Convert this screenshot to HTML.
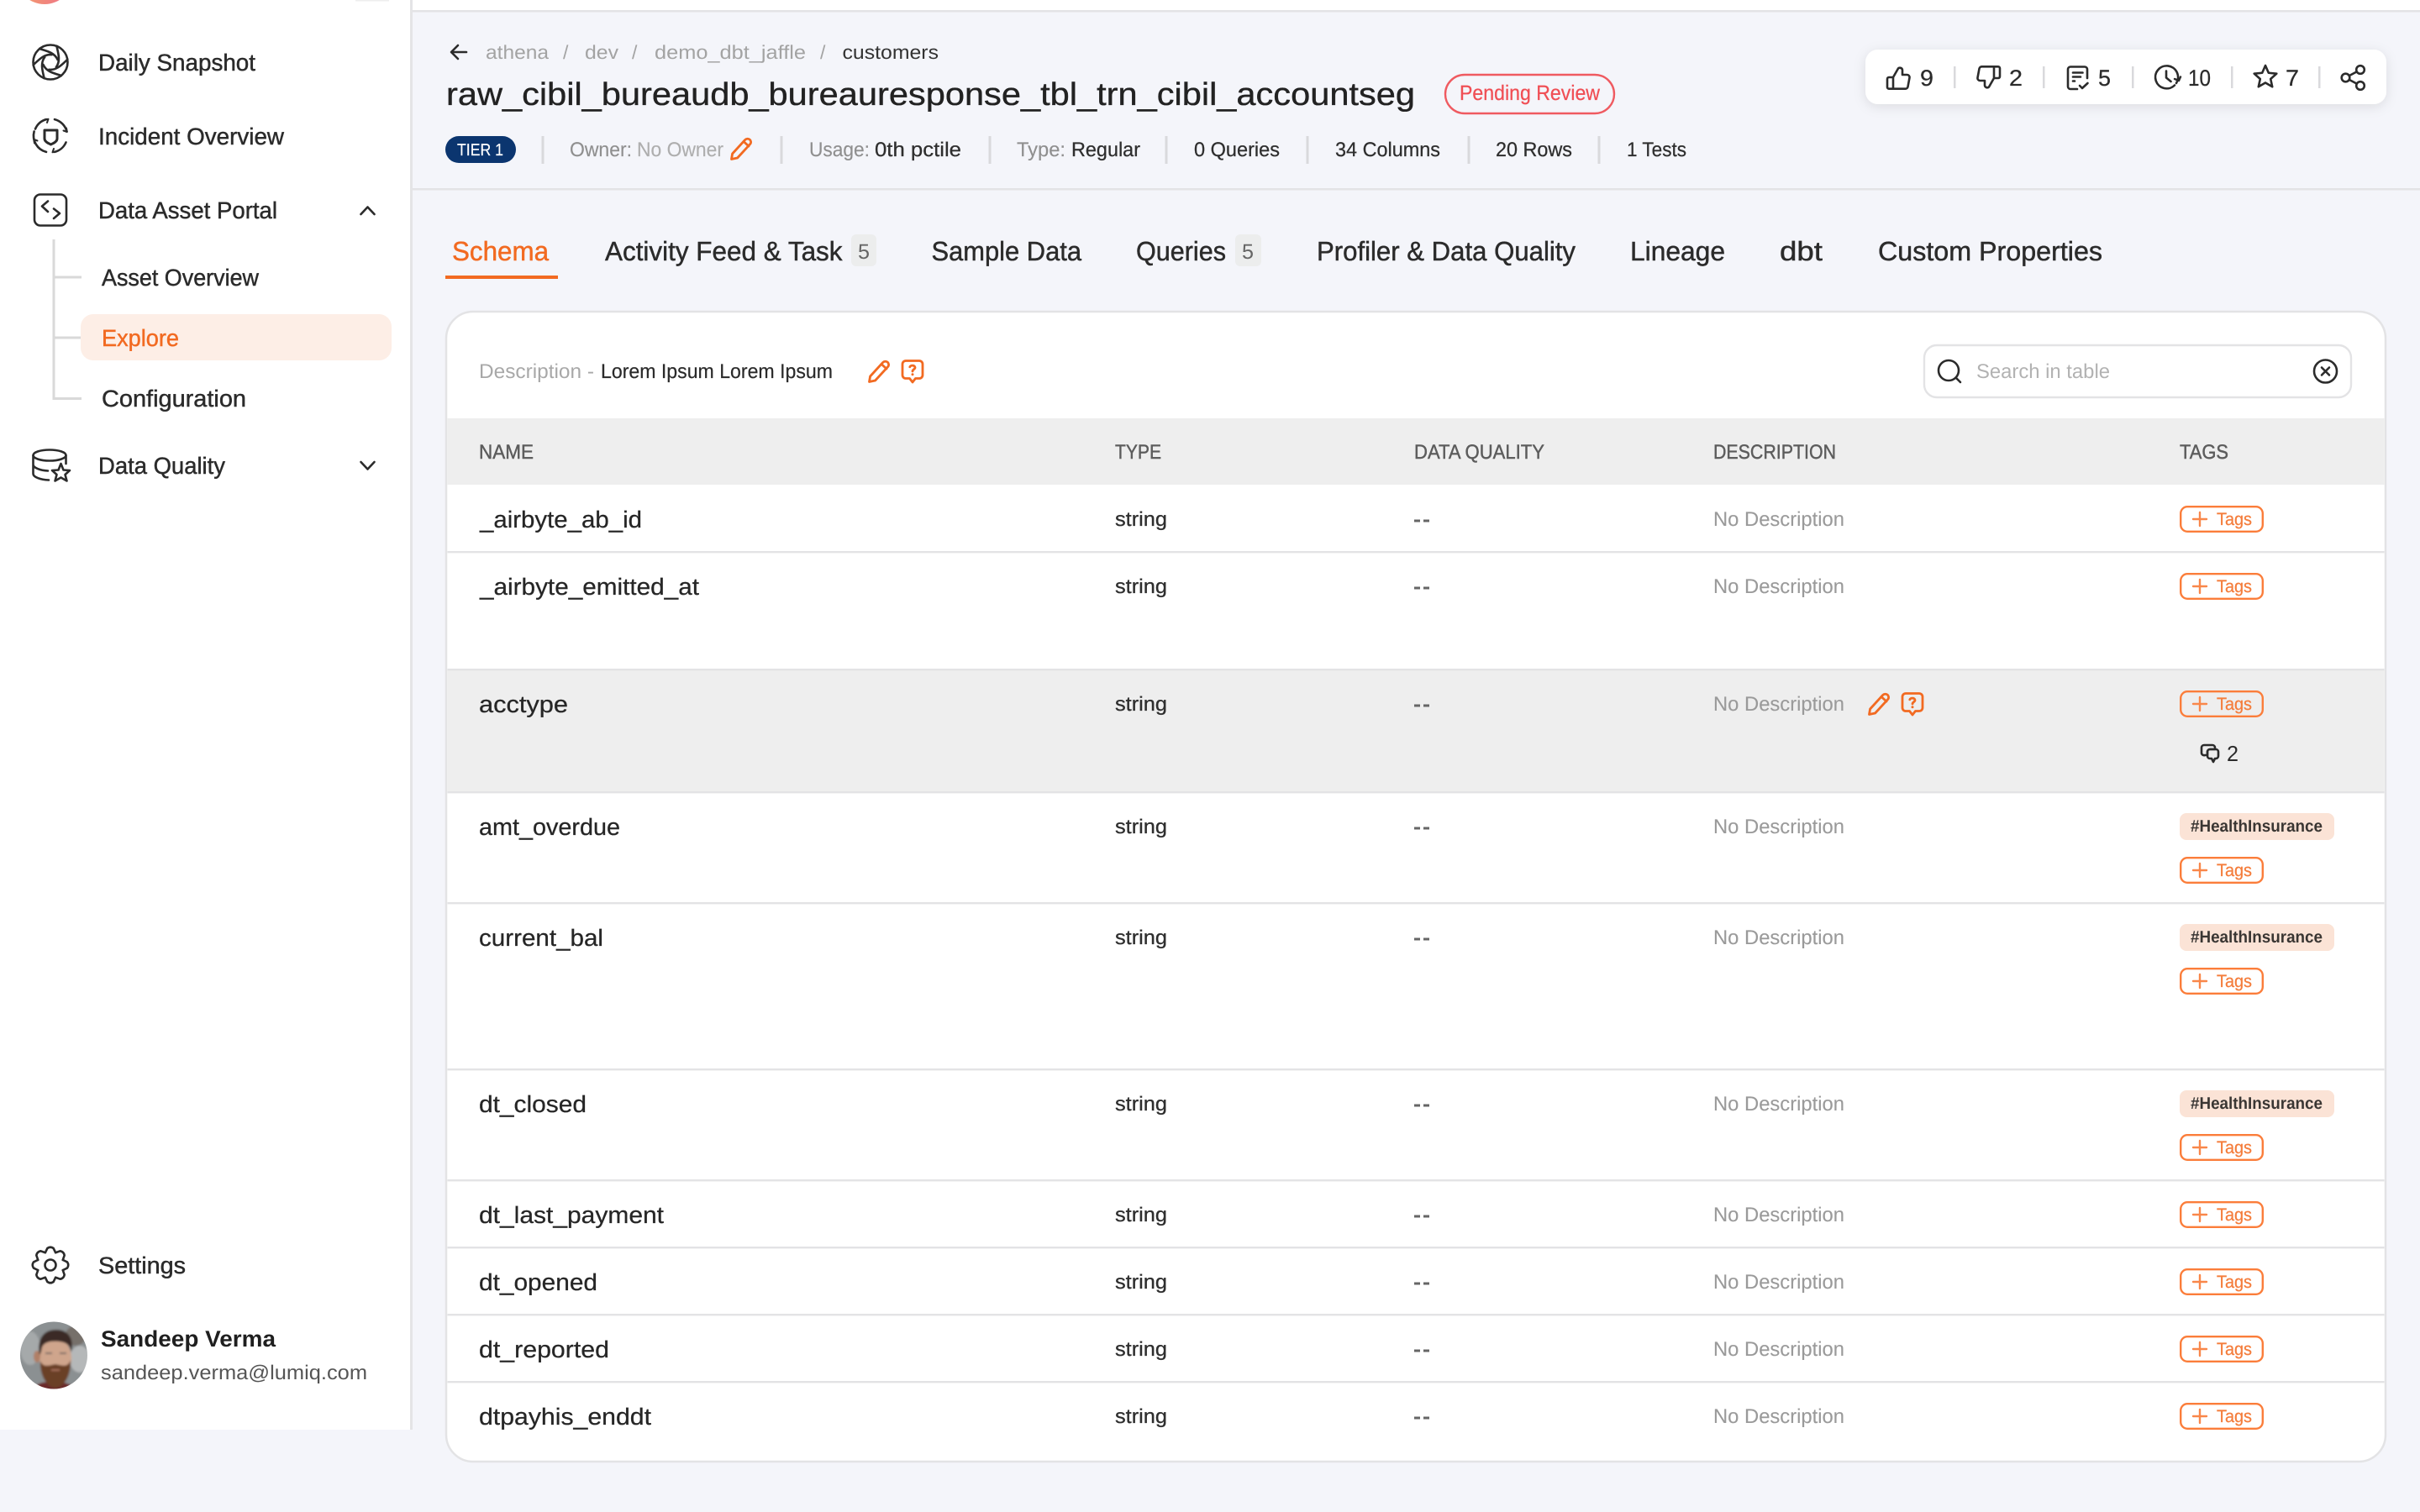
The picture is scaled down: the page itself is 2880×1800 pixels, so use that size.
<!DOCTYPE html>
<html lang="en">
<head>
<meta charset="utf-8">
<title>Explore - customers</title>
<style>
html,body{margin:0;padding:0;background:#f4f5fa;width:2880px;height:1800px;overflow:hidden}
svg{display:block;font-family:"Liberation Sans",Arial,sans-serif;text-rendering:geometricPrecision}
.nav{font-size:28px;fill:#2b2b2b;stroke:#2b2b2b;stroke-width:.45}
.bc{font-size:23px;fill:#a3a3a3}
.meta{font-size:24px;fill:#2e2e2e;stroke:#2e2e2e;stroke-width:.25}
.lab{font-size:24px;fill:#8f8f8f;stroke:#8f8f8f;stroke-width:.15}
.tab{font-size:32px;fill:#2b2b2b;stroke:#2b2b2b;stroke-width:.45}
.th{font-size:24px;fill:#5c5c5c;stroke:#5c5c5c;stroke-width:.45}
.nm{font-size:28px;fill:#262626;stroke:#262626;stroke-width:.25}
.ty{font-size:24px;fill:#2e2e2e;stroke:#2e2e2e;stroke-width:.3}
.nd{font-size:24px;fill:#9a9a9a;stroke:#9a9a9a;stroke-width:.1}
.tg{font-size:21px;fill:#f47d3c;stroke:#f47d3c;stroke-width:.25}
.ht{font-size:20px;font-weight:bold;fill:#3a3633}
.num{font-size:27px;fill:#2b2b2b;stroke:#2b2b2b;stroke-width:.25}
.ic{fill:none;stroke:#2b2b2b;stroke-width:2.6;stroke-linecap:round;stroke-linejoin:round}
.or{fill:none;stroke:#f26a21;stroke-width:2.8;stroke-linecap:round;stroke-linejoin:round}
.sep{fill:#d9d9dc}
.ln{fill:#e3e3e5}
</style>
</head>
<body>
<svg xmlns="http://www.w3.org/2000/svg" width="2880" height="1800" viewBox="0 0 2880 1800">
<defs>
  <filter id="sh" x="-5%" y="-30%" width="110%" height="170%"><feDropShadow dx="0" dy="3" stdDeviation="7" flood-color="#000" flood-opacity=".10"/></filter>
  <filter id="bl"><feGaussianBlur stdDeviation="1.300"/></filter>
  <linearGradient id="lg" x1="0" x2="1"><stop offset="0" stop-color="#f3a06b"/><stop offset="1" stop-color="#ef6f8c"/></linearGradient>
  <clipPath id="av"><circle cx="64" cy="1613.5" r="40"/></clipPath>
  <g id="tb">
    <rect x="2595.2" y="1.2" width="97.6" height="29.6" rx="8" fill="none" stroke="#fb7d3a" stroke-width="2.4"/>
    <path d="M2618 8v16M2610 16h16" fill="none" stroke="#f9874a" stroke-width="2.4" stroke-linecap="round"/>
  </g>
  <g id="pen"><path d="M2.5 26.5 3.6 20 18.6 3.6c1.5-1.6 4.100-1.800 5.700-.4 1.600 1.400 1.800 3.800.4 5.400L9.600 25z" class="or"/><path d="M17 5.500 23 11" class="or"/></g>
  <g id="qb"><path d="M6 1.500h16a4 4 0 0 1 4 4v13a4 4 0 0 1-4 4h-4.500L14 27l-3.500-4.500H6a4 4 0 0 1-4-4v-13a4 4 0 0 1 4-4z" class="or"/><path d="M10.800 8.800c.5-2 5.800-2.600 6.200.5.300 2.300-3 2.300-3 4.700" class="or" stroke-width="2.400"/><circle cx="14" cy="17.800" r="1.500" fill="#f26a21"/></g>
</defs>

<!-- page -->
<rect width="2880" height="1800" fill="#f4f5fa"/>
<rect x="491" y="0" width="2389" height="12" fill="#fff"/>
<rect x="491" y="12" width="2389" height="2.500" class="ln"/>
<rect x="491" y="224" width="2389" height="2.500" class="ln"/>

<!-- sidebar -->
<rect x="0" y="0" width="488" height="1702" fill="#fff"/>
<rect x="488" y="0" width="3" height="1702" fill="#e4e4e6"/>
<circle cx="53" cy="-29" r="34" fill="url(#lg)"/>
<rect x="423" y="0" width="40" height="1.500" fill="#eee"/>

<!-- aperture -->
<g class="ic" transform="translate(60 74)">
  <circle r="20.500"/>
  <path d="M-13-16C-5-13.500 5-11.500 8.500-3"/>
  <path d="M-13-16C-5-13.500 5-11.500 8.500-3" transform="rotate(60)"/>
  <path d="M-13-16C-5-13.500 5-11.500 8.500-3" transform="rotate(120)"/>
  <path d="M-13-16C-5-13.500 5-11.500 8.500-3" transform="rotate(180)"/>
  <path d="M-13-16C-5-13.500 5-11.500 8.500-3" transform="rotate(240)"/>
  <path d="M-13-16C-5-13.500 5-11.500 8.500-3" transform="rotate(300)"/>
</g>
<text x="117" y="84" class="nav" textLength="187" lengthAdjust="spacingAndGlyphs">Daily Snapshot</text>

<!-- incident -->
<g class="ic" transform="translate(60 161.500)">
  <path d="M-18-8A20 20 0 0 1-5-19.400"/>
  <path d="M5-19.400A20 20 0 0 1 19.500-5"/>
  <path d="M18.500 8A20 20 0 0 1 5 19.400"/>
  <path d="M-5 19.400A20 20 0 0 1-19.400-5"/>
  <path d="M-7-19 -2.500-19.800-4-15.500M19-9 19.800-4.500 15.500-6M7 19 2.500 19.800 4 15.500M-19 9-19.800 4.500-15.500 6" stroke-width="2"/>
  <path d="M-7-6.500H8V3.500C8 7 4 9 .5 10.500-3 9-7 7-7 3.500z" stroke-width="3"/>
</g>
<text x="117" y="172" class="nav" textLength="221" lengthAdjust="spacingAndGlyphs">Incident Overview</text>

<!-- code -->
<g class="ic">
  <rect x="41" y="231.500" width="38" height="37" rx="7"/>
  <path d="M57 239.500 50 245.500 57 252M64 248.500 71 254 64 260"/>
</g>
<text x="117" y="260" class="nav" textLength="213" lengthAdjust="spacingAndGlyphs">Data Asset Portal</text>
<path d="M429.500 255 437.500 246.500 445.500 255" class="ic"/>

<!-- tree -->
<rect x="62.500" y="285" width="3" height="191" fill="#d9d9d9"/>
<rect x="65" y="328.500" width="32" height="3" fill="#d9d9d9"/>
<rect x="65" y="400.500" width="32" height="3" fill="#d9d9d9"/>
<rect x="65" y="473" width="32" height="3" fill="#d9d9d9"/>
<rect x="96" y="374" width="370" height="55" rx="15" fill="#fdeee6"/>
<text x="121" y="340" class="nav" textLength="187" lengthAdjust="spacingAndGlyphs">Asset Overview</text>
<text x="121" y="412" class="nav" style="fill:#f26a21;stroke:#f26a21" textLength="92" lengthAdjust="spacingAndGlyphs">Explore</text>
<text x="121" y="484" class="nav" textLength="172" lengthAdjust="spacingAndGlyphs">Configuration</text>

<!-- data quality -->
<g class="ic">
  <ellipse cx="59" cy="542" rx="19.500" ry="6.500"/>
  <path d="M39.500 542V564C39.500 568 48 571 58 571.500M78.500 542V552M39.500 553C39.500 557 48 560 57 560.500"/>
  <path d="M72.500 552 75.500 559.500 83 560 77.500 565 79.500 572.500 72.500 568.500 65.500 572.500 67.500 565 62 560 69.500 559.500z"/>
</g>
<text x="117" y="564" class="nav" textLength="151" lengthAdjust="spacingAndGlyphs">Data Quality</text>
<path d="M429.500 550 437.500 558.500 445.500 550" class="ic"/>

<!-- settings -->
<g class="ic" transform="translate(60 1506)">
  <circle r="6.500"/>
  <path d="M-6.120-14.780-3.600-20Q0-22.500 3.600-20L6.120-14.780"/>
  <path d="M-6.120-14.780-3.600-20Q0-22.500 3.600-20L6.120-14.780" transform="rotate(45)"/>
  <path d="M-6.120-14.780-3.600-20Q0-22.500 3.600-20L6.120-14.780" transform="rotate(90)"/>
  <path d="M-6.120-14.780-3.600-20Q0-22.500 3.600-20L6.120-14.780" transform="rotate(135)"/>
  <path d="M-6.120-14.780-3.600-20Q0-22.500 3.600-20L6.120-14.780" transform="rotate(180)"/>
  <path d="M-6.120-14.780-3.600-20Q0-22.500 3.600-20L6.120-14.780" transform="rotate(225)"/>
  <path d="M-6.120-14.780-3.600-20Q0-22.500 3.600-20L6.120-14.780" transform="rotate(270)"/>
  <path d="M-6.120-14.780-3.600-20Q0-22.500 3.600-20L6.120-14.780" transform="rotate(315)"/>
</g>
<text x="117" y="1516" class="nav" textLength="104" lengthAdjust="spacingAndGlyphs">Settings</text>

<!-- avatar -->
<g clip-path="url(#av)">
  <g filter="url(#bl)">
    <rect x="20" y="1570" width="88" height="88" fill="#8b9092"/>
    <ellipse cx="36" cy="1605" rx="12" ry="20" fill="#a5a9aa"/>
    <ellipse cx="95" cy="1618" rx="12" ry="16" fill="#b5b8b9"/>
    <ellipse cx="90" cy="1590" rx="12" ry="12" fill="#76706a"/>
    <path d="M36 1658C42 1646 52 1644 64 1646 76 1644 88 1648 94 1658z" fill="#6b2a2a"/>
    <ellipse cx="66" cy="1617" rx="19" ry="25" fill="#cfa58c"/>
    <ellipse cx="44" cy="1615" rx="4" ry="7" fill="#b07f66"/>
    <path d="M47 1613C44 1596 50 1583 67 1583 83 1583 88 1596 85 1609 83 1601 79 1598 70 1597 60 1596 52 1598 50 1604 49 1608 49 1611 47 1613z" fill="#3b2c25"/>
    <path d="M48 1620C51 1628 57 1626 66 1624 75 1626 81 1628 84 1619 85 1637 76 1652 66 1652 56 1652 47 1637 48 1620z" fill="#6a4028"/>
    <path d="M54 1611h8M71 1611h8" stroke="#7a6a64" stroke-width="2"/>
    <path d="M61 1631h10" stroke="#a8705c" stroke-width="2"/>
  </g>
</g>
<text x="120" y="1603" font-size="27" font-weight="bold" fill="#1f1f1f" textLength="208" lengthAdjust="spacingAndGlyphs">Sandeep Verma</text>
<text x="120" y="1642" font-size="24" fill="#555" textLength="317" lengthAdjust="spacingAndGlyphs">sandeep.verma@lumiq.com</text>

<!-- breadcrumb -->
<path d="M555 62H538M545 54 537 62 545 70" class="ic" stroke-width="2.400"/>
<text x="578" y="70" class="bc" textLength="75" lengthAdjust="spacingAndGlyphs">athena</text>
<text x="670" y="70" class="bc">/</text>
<text x="696" y="70" class="bc" textLength="40" lengthAdjust="spacingAndGlyphs">dev</text>
<text x="752" y="70" class="bc">/</text>
<text x="779" y="70" class="bc" textLength="180" lengthAdjust="spacingAndGlyphs">demo_dbt_jaffle</text>
<text x="976" y="70" class="bc">/</text>
<text x="1002.500" y="70" class="bc" style="fill:#333" textLength="114.500" lengthAdjust="spacingAndGlyphs">customers</text>

<!-- title -->
<text x="531" y="125" font-size="38" fill="#222" stroke="#222" stroke-width=".35" textLength="1153" lengthAdjust="spacingAndGlyphs">raw_cibil_bureaudb_bureauresponse_tbl_trn_cibil_accountseg</text>
<rect x="1720" y="89" width="201" height="46" rx="23" fill="none" stroke="#ef5a60" stroke-width="2.400"/>
<text x="1737" y="119" font-size="25" fill="#f04f55" stroke="#f04f55" stroke-width=".25" textLength="167" lengthAdjust="spacingAndGlyphs">Pending Review</text>

<!-- meta row -->
<rect x="530" y="162" width="84" height="32" rx="16" fill="#0b356f"/>
<text x="544" y="185" font-size="20" fill="#fff" stroke="#fff" stroke-width=".2" textLength="55" lengthAdjust="spacingAndGlyphs">TIER 1</text>
<rect x="644.500" y="162" width="3" height="33" class="sep"/>
<rect x="928.500" y="162" width="3" height="33" class="sep"/>
<rect x="1176.500" y="162" width="3" height="33" class="sep"/>
<rect x="1386.500" y="162" width="3" height="33" class="sep"/>
<rect x="1554.500" y="162" width="3" height="33" class="sep"/>
<rect x="1746.500" y="162" width="3" height="33" class="sep"/>
<rect x="1901.500" y="162" width="3" height="33" class="sep"/>
<text x="678" y="186" class="lab" textLength="74" lengthAdjust="spacingAndGlyphs">Owner:</text>
<text x="758" y="186" class="lab" style="fill:#aeaeae;stroke:#aeaeae" textLength="103" lengthAdjust="spacingAndGlyphs">No Owner</text>
<use href="#pen" transform="translate(868 163)"/>
<text x="963" y="186" class="lab" textLength="72" lengthAdjust="spacingAndGlyphs">Usage:</text>
<text x="1041" y="186" class="meta" textLength="103" lengthAdjust="spacingAndGlyphs">0th pctile</text>
<text x="1210" y="186" class="lab" textLength="58" lengthAdjust="spacingAndGlyphs">Type:</text>
<text x="1275" y="186" class="meta" textLength="82" lengthAdjust="spacingAndGlyphs">Regular</text>
<text x="1421" y="186" class="meta" textLength="102" lengthAdjust="spacingAndGlyphs">0 Queries</text>
<text x="1589" y="186" class="meta" textLength="125" lengthAdjust="spacingAndGlyphs">34 Columns</text>
<text x="1780" y="186" class="meta" textLength="91" lengthAdjust="spacingAndGlyphs">20 Rows</text>
<text x="1936" y="186" class="meta" textLength="71" lengthAdjust="spacingAndGlyphs">1 Tests</text>

<!-- action card -->
<rect x="2220" y="59" width="620" height="65" rx="15" fill="#fff" filter="url(#sh)"/>
<g class="ic">
  <g transform="translate(2245 78)">
    <path d="M8 14 14 3.500a3 3 0 0 1 5 1.800V11h5.500a3 3 0 0 1 3 3.500l-2 10.800a3 3 0 0 1-3 2.400H3a2 2 0 0 1-2-2V16a2 2 0 0 1 2-2H8V27.500"/>
  </g>
  <g transform="translate(2381 107) rotate(180)">
    <path d="M8 14 14 3.500a3 3 0 0 1 5 1.800V11h5.500a3 3 0 0 1 3 3.500l-2 10.800a3 3 0 0 1-3 2.400H3a2 2 0 0 1-2-2V16a2 2 0 0 1 2-2H8V27.500"/>
  </g>
  <g transform="translate(2460 78)">
    <path d="M24 15V4.500a3 3 0 0 0-3-3H4a3 3 0 0 0-3 3V25a3 3 0 0 0 3 3h8"/>
    <path d="M7 8.500h11.500M7 13.500h9M7 18.500h2"/>
    <path d="M15 24l3 3 6.500-6"/>
  </g>
  <g transform="translate(2578 92)">
    <path d="M12 7A13.500 13.500 0 1 0 10 9.500"/>
    <path d="M0-7.500V.5L5.500 5"/>
    <path d="M10 2l5 2 2-4.500" stroke-width="2.400"/>
  </g>
  <path d="M2696 78 2699.800 86.740 2709.300 87.670 2702.200 94 2704.200 103.300 2696 98.500 2687.800 103.300 2689.800 94 2682.700 87.670 2692.200 86.740z"/>
  <circle cx="2791.500" cy="92.500" r="4.800"/>
  <circle cx="2809" cy="83" r="4.800"/>
  <circle cx="2809" cy="102" r="4.800"/>
  <path d="M2796 90 2804.500 85.500M2796 95 2804.500 99.500"/>
</g>
<text x="2285" y="102" class="num" textLength="16" lengthAdjust="spacingAndGlyphs">9</text>
<text x="2391" y="102" class="num" textLength="16" lengthAdjust="spacingAndGlyphs">2</text>
<text x="2497" y="102" class="num" textLength="15" lengthAdjust="spacingAndGlyphs">5</text>
<text x="2604" y="102" class="num" textLength="27" lengthAdjust="spacingAndGlyphs">10</text>
<text x="2720" y="102" class="num" textLength="16" lengthAdjust="spacingAndGlyphs">7</text>
<rect x="2325" y="79" width="2.500" height="26" class="sep"/>
<rect x="2431" y="79" width="2.500" height="26" class="sep"/>
<rect x="2537" y="79" width="2.500" height="26" class="sep"/>
<rect x="2655" y="79" width="2.500" height="26" class="sep"/>
<rect x="2759" y="79" width="2.500" height="26" class="sep"/>

<!-- tabs -->
<text x="538" y="310" class="tab" style="fill:#f26a21;stroke:#f26a21" textLength="115" lengthAdjust="spacingAndGlyphs">Schema</text>
<rect x="530" y="328" width="134" height="4" fill="#f26a21"/>
<text x="720" y="310" class="tab" textLength="282.500" lengthAdjust="spacingAndGlyphs">Activity Feed &amp; Task</text>
<rect x="1013" y="279" width="30" height="38" rx="6" fill="#eceded"/>
<text x="1021" y="308" font-size="25" fill="#666" textLength="14" lengthAdjust="spacingAndGlyphs">5</text>
<text x="1108.500" y="310" class="tab" textLength="178.500" lengthAdjust="spacingAndGlyphs">Sample Data</text>
<text x="1352" y="310" class="tab" textLength="107" lengthAdjust="spacingAndGlyphs">Queries</text>
<rect x="1470" y="279" width="31" height="38" rx="6" fill="#eceded"/>
<text x="1478" y="308" font-size="25" fill="#666" textLength="14" lengthAdjust="spacingAndGlyphs">5</text>
<text x="1567" y="310" class="tab" textLength="308" lengthAdjust="spacingAndGlyphs">Profiler &amp; Data Quality</text>
<text x="1940" y="310" class="tab" textLength="113" lengthAdjust="spacingAndGlyphs">Lineage</text>
<text x="2118" y="310" class="tab" textLength="51" lengthAdjust="spacingAndGlyphs">dbt</text>
<text x="2235" y="310" class="tab" textLength="267" lengthAdjust="spacingAndGlyphs">Custom Properties</text>

<!-- table card -->
<rect x="531" y="371" width="2308" height="1369" rx="32" fill="#fff" stroke="#e3e3e5" stroke-width="2.500"/>
<text x="570" y="450" font-size="24" fill="#a8a8a8" textLength="137" lengthAdjust="spacingAndGlyphs">Description -</text>
<text x="715" y="450" font-size="24" fill="#2a2a2a" stroke="#2a2a2a" stroke-width=".2" textLength="276" lengthAdjust="spacingAndGlyphs">Lorem Ipsum Lorem Ipsum</text>
<use href="#pen" transform="translate(1032 428)"/>
<use href="#qb" transform="translate(1072 428)"/>
<rect x="2290" y="411" width="508" height="62" rx="15" fill="#fff" stroke="#e3e3e5" stroke-width="2.400"/>
<g class="ic"><circle cx="2319" cy="441" r="12"/><path d="M2328 450 2333 455"/></g>
<text x="2352" y="450" font-size="24" fill="#b2b2b2" textLength="159" lengthAdjust="spacingAndGlyphs">Search in table</text>
<g class="ic"><circle cx="2767.500" cy="442" r="13.500"/><path d="M2763 437.500 2772 446.500M2772 437.500 2763 446.500"/></g>

<rect x="532.500" y="498" width="2305" height="79" fill="#eeeeee"/>
<text x="570" y="546" class="th" textLength="65" lengthAdjust="spacingAndGlyphs">NAME</text>
<text x="1327" y="546" class="th" textLength="55" lengthAdjust="spacingAndGlyphs">TYPE</text>
<text x="1683" y="546" class="th" textLength="155" lengthAdjust="spacingAndGlyphs">DATA QUALITY</text>
<text x="2039" y="546" class="th" textLength="146" lengthAdjust="spacingAndGlyphs">DESCRIPTION</text>
<text x="2594" y="546" class="th" textLength="58" lengthAdjust="spacingAndGlyphs">TAGS</text>

<!-- hover row + row lines -->
<rect x="532.500" y="797" width="2305" height="146" fill="#eeeeee"/>
<rect x="532.500" y="656" width="2305" height="2.400" class="ln"/>
<rect x="532.500" y="796" width="2305" height="2.400" class="ln"/>
<rect x="532.500" y="942" width="2305" height="2.400" class="ln"/>
<rect x="532.500" y="1074" width="2305" height="2.400" class="ln"/>
<rect x="532.500" y="1272" width="2305" height="2.400" class="ln"/>
<rect x="532.500" y="1404" width="2305" height="2.400" class="ln"/>
<rect x="532.500" y="1484" width="2305" height="2.400" class="ln"/>
<rect x="532.500" y="1564" width="2305" height="2.400" class="ln"/>
<rect x="532.500" y="1644" width="2305" height="2.400" class="ln"/>

<!-- row 1 -->
<text x="571" y="628" class="nm" textLength="193" lengthAdjust="spacingAndGlyphs">_airbyte_ab_id</text>
<text x="1327" y="626" class="ty" textLength="62" lengthAdjust="spacingAndGlyphs">string</text>
<path d="M1683 620h7M1694 620h7" stroke="#666" stroke-width="3"/>
<text x="2039" y="626" class="nd" textLength="156" lengthAdjust="spacingAndGlyphs">No Description</text>
<use href="#tb" y="602"/><text x="2638" y="625" class="tg" textLength="42" lengthAdjust="spacingAndGlyphs">Tags</text>

<!-- row 2 -->
<text x="571" y="708" class="nm" textLength="261" lengthAdjust="spacingAndGlyphs">_airbyte_emitted_at</text>
<text x="1327" y="706" class="ty" textLength="62" lengthAdjust="spacingAndGlyphs">string</text>
<path d="M1683 700h7M1694 700h7" stroke="#666" stroke-width="3"/>
<text x="2039" y="706" class="nd" textLength="156" lengthAdjust="spacingAndGlyphs">No Description</text>
<use href="#tb" y="682"/><text x="2638" y="705" class="tg" textLength="42" lengthAdjust="spacingAndGlyphs">Tags</text>

<!-- row 3 -->
<text x="570" y="848" class="nm" textLength="106" lengthAdjust="spacingAndGlyphs">acctype</text>
<text x="1327" y="846" class="ty" textLength="62" lengthAdjust="spacingAndGlyphs">string</text>
<path d="M1683 840h7M1694 840h7" stroke="#666" stroke-width="3"/>
<text x="2039" y="846" class="nd" textLength="156" lengthAdjust="spacingAndGlyphs">No Description</text>
<use href="#pen" transform="translate(2222 824)"/>
<use href="#qb" transform="translate(2262 824)"/>
<use href="#tb" y="822"/><text x="2638" y="845" class="tg" textLength="42" lengthAdjust="spacingAndGlyphs">Tags</text>
<g class="ic" stroke-width="2.400">
  <path d="M2623 887h10a3 3 0 0 1 3 3v2h-6a3 3 0 0 0-3 3v4l-3 0a3 3 0 0 1-4-3v-6a3 3 0 0 1 3-3z"/>
  <path d="M2630 892h7a3 3 0 0 1 3 3v5a3 3 0 0 1-3 3h-1l-2 4-2-4h-2a3 3 0 0 1-3-3v-5a3 3 0 0 1 3-3z"/>
</g>
<text x="2650" y="906" font-size="26" fill="#2b2b2b" textLength="14" lengthAdjust="spacingAndGlyphs">2</text>

<!-- row 4 -->
<text x="570" y="994" class="nm" textLength="168" lengthAdjust="spacingAndGlyphs">amt_overdue</text>
<text x="1327" y="992" class="ty" textLength="62" lengthAdjust="spacingAndGlyphs">string</text>
<path d="M1683 986h7M1694 986h7" stroke="#666" stroke-width="3"/>
<text x="2039" y="992" class="nd" textLength="156" lengthAdjust="spacingAndGlyphs">No Description</text>
<rect x="2594" y="968" width="184" height="32" rx="8" fill="#fbe3d6"/>
<text x="2607" y="990" class="ht" textLength="157" lengthAdjust="spacingAndGlyphs">#HealthInsurance</text>
<use href="#tb" y="1020"/><text x="2638" y="1043" class="tg" textLength="42" lengthAdjust="spacingAndGlyphs">Tags</text>

<!-- row 5 -->
<text x="570" y="1126" class="nm" textLength="148" lengthAdjust="spacingAndGlyphs">current_bal</text>
<text x="1327" y="1124" class="ty" textLength="62" lengthAdjust="spacingAndGlyphs">string</text>
<path d="M1683 1118h7M1694 1118h7" stroke="#666" stroke-width="3"/>
<text x="2039" y="1124" class="nd" textLength="156" lengthAdjust="spacingAndGlyphs">No Description</text>
<rect x="2594" y="1100" width="184" height="32" rx="8" fill="#fbe3d6"/>
<text x="2607" y="1122" class="ht" textLength="157" lengthAdjust="spacingAndGlyphs">#HealthInsurance</text>
<use href="#tb" y="1152"/><text x="2638" y="1175" class="tg" textLength="42" lengthAdjust="spacingAndGlyphs">Tags</text>

<!-- row 6 -->
<text x="570" y="1324" class="nm" textLength="128" lengthAdjust="spacingAndGlyphs">dt_closed</text>
<text x="1327" y="1322" class="ty" textLength="62" lengthAdjust="spacingAndGlyphs">string</text>
<path d="M1683 1316h7M1694 1316h7" stroke="#666" stroke-width="3"/>
<text x="2039" y="1322" class="nd" textLength="156" lengthAdjust="spacingAndGlyphs">No Description</text>
<rect x="2594" y="1298" width="184" height="32" rx="8" fill="#fbe3d6"/>
<text x="2607" y="1320" class="ht" textLength="157" lengthAdjust="spacingAndGlyphs">#HealthInsurance</text>
<use href="#tb" y="1350"/><text x="2638" y="1373" class="tg" textLength="42" lengthAdjust="spacingAndGlyphs">Tags</text>

<!-- row 7 -->
<text x="570" y="1456" class="nm" textLength="220" lengthAdjust="spacingAndGlyphs">dt_last_payment</text>
<text x="1327" y="1454" class="ty" textLength="62" lengthAdjust="spacingAndGlyphs">string</text>
<path d="M1683 1448h7M1694 1448h7" stroke="#666" stroke-width="3"/>
<text x="2039" y="1454" class="nd" textLength="156" lengthAdjust="spacingAndGlyphs">No Description</text>
<use href="#tb" y="1430"/><text x="2638" y="1453" class="tg" textLength="42" lengthAdjust="spacingAndGlyphs">Tags</text>

<!-- row 8 -->
<text x="570" y="1536" class="nm" textLength="141" lengthAdjust="spacingAndGlyphs">dt_opened</text>
<text x="1327" y="1534" class="ty" textLength="62" lengthAdjust="spacingAndGlyphs">string</text>
<path d="M1683 1528h7M1694 1528h7" stroke="#666" stroke-width="3"/>
<text x="2039" y="1534" class="nd" textLength="156" lengthAdjust="spacingAndGlyphs">No Description</text>
<use href="#tb" y="1510"/><text x="2638" y="1533" class="tg" textLength="42" lengthAdjust="spacingAndGlyphs">Tags</text>

<!-- row 9 -->
<text x="570" y="1616" class="nm" textLength="155" lengthAdjust="spacingAndGlyphs">dt_reported</text>
<text x="1327" y="1614" class="ty" textLength="62" lengthAdjust="spacingAndGlyphs">string</text>
<path d="M1683 1608h7M1694 1608h7" stroke="#666" stroke-width="3"/>
<text x="2039" y="1614" class="nd" textLength="156" lengthAdjust="spacingAndGlyphs">No Description</text>
<use href="#tb" y="1590"/><text x="2638" y="1613" class="tg" textLength="42" lengthAdjust="spacingAndGlyphs">Tags</text>

<!-- row 10 -->
<text x="570" y="1696" class="nm" textLength="205" lengthAdjust="spacingAndGlyphs">dtpayhis_enddt</text>
<text x="1327" y="1694" class="ty" textLength="62" lengthAdjust="spacingAndGlyphs">string</text>
<path d="M1683 1688h7M1694 1688h7" stroke="#666" stroke-width="3"/>
<text x="2039" y="1694" class="nd" textLength="156" lengthAdjust="spacingAndGlyphs">No Description</text>
<use href="#tb" y="1670"/><text x="2638" y="1693" class="tg" textLength="42" lengthAdjust="spacingAndGlyphs">Tags</text>
</svg>
</body>
</html>
